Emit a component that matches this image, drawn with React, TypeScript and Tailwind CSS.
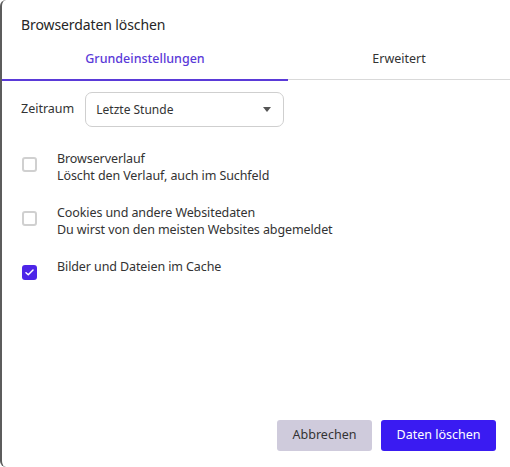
import React, { useState } from 'react';

const options = [
  { id: 'history', title: 'Browserverlauf', desc: 'Löscht den Verlauf, auch im Suchfeld', checked: false },
  { id: 'cookies', title: 'Cookies und andere Websitedaten', desc: 'Du wirst von den meisten Websites abgemeldet', checked: false },
  { id: 'cache', title: 'Bilder und Dateien im Cache', desc: '', checked: true },
];

export default function App() {
  const [checked, setChecked] = useState<Record<string, boolean>>(
    Object.fromEntries(options.map((o) => [o.id, o.checked]))
  );

  return (
    <div className="w-[510px] h-[467px] bg-white font-['Noto_Sans',sans-serif] text-[#222]">
      <div className="h-full flex flex-col border-l-2 border-[#5c5c5c] rounded-l-[6px] bg-white">
        {/* Titel */}
        <div className="pl-[19px] pt-[14px] h-[46px] text-[14px] tracking-[-0.1px] text-[#262626]">Browserdaten löschen</div>

        {/* Tabs */}
        <div className="flex h-[35px] text-[12.5px]">
          <div className="w-[286px] flex items-start justify-center pt-[4px] text-[#5a3ad8] font-medium border-b-2 border-[#5a3ad8]">
            Grundeinstellungen
          </div>
          <div className="flex-1 flex items-start justify-center pt-[4px] text-[#333] border-b border-[#d9d9d9] h-[34px]">
            Erweitert
          </div>
        </div>

        {/* Zeitraum */}
        <div className="flex items-center pl-[19px] mt-[11px] gap-[11px]">
          <span className="text-[12.5px] text-[#333]">Zeitraum</span>
          <div className="w-[199px] h-[35px] border border-[#cfcfcf] rounded-[7px] flex items-center justify-between pl-[10px] pr-[12px]">
            <span className="text-[12px] text-[#333]">Letzte Stunde</span>
            <svg width="8" height="5" viewBox="0 0 8 5">
              <path d="M0 0h8L4 5z" fill="#555" />
            </svg>
          </div>
        </div>

        {/* Optionen */}
        <div className="flex flex-col pl-[20px] mt-[22px] gap-[19px]">
          {options.map((o) => (
            <label key={o.id} className="flex items-start cursor-pointer">
              <button
                onClick={() => setChecked((p) => ({ ...p, [o.id]: !p[o.id] }))}
                className={
                  checked[o.id]
                    ? 'mt-[8px] w-[15px] h-[15px] rounded-[3px] bg-[#4d25e8] flex items-center justify-center'
                    : 'mt-[8px] w-[15px] h-[15px] rounded-[3px] border-2 border-[#d0d0d0] bg-white'
                }
              >
                {checked[o.id] && (
                  <svg width="9" height="7" viewBox="0 0 10 8">
                    <path d="M1 4.2l2.6 2.4L9 1.2" stroke="white" strokeWidth="1.7" fill="none" strokeLinecap="round" strokeLinejoin="round" />
                  </svg>
                )}
              </button>
              <div className="ml-[20px] flex flex-col text-[12.5px] tracking-[-0.1px] leading-[17px] text-[#333] pt-[1px]">
                <span>{o.title}</span>
                {o.desc && <span>{o.desc}</span>}
              </div>
            </label>
          ))}
        </div>

        {/* Buttons */}
        <div className="mt-auto mb-[16px] flex justify-end gap-[9px] pr-[14px]">
          <button className="w-[95px] h-[31px] rounded-[3px] bg-[#cfcbdc] text-[12.5px] text-[#333]">Abbrechen</button>
          <button className="w-[115px] h-[31px] rounded-[3px] bg-[#3a1bf2] text-[12.5px] text-white">Daten löschen</button>
        </div>
      </div>
    </div>
  );
}
